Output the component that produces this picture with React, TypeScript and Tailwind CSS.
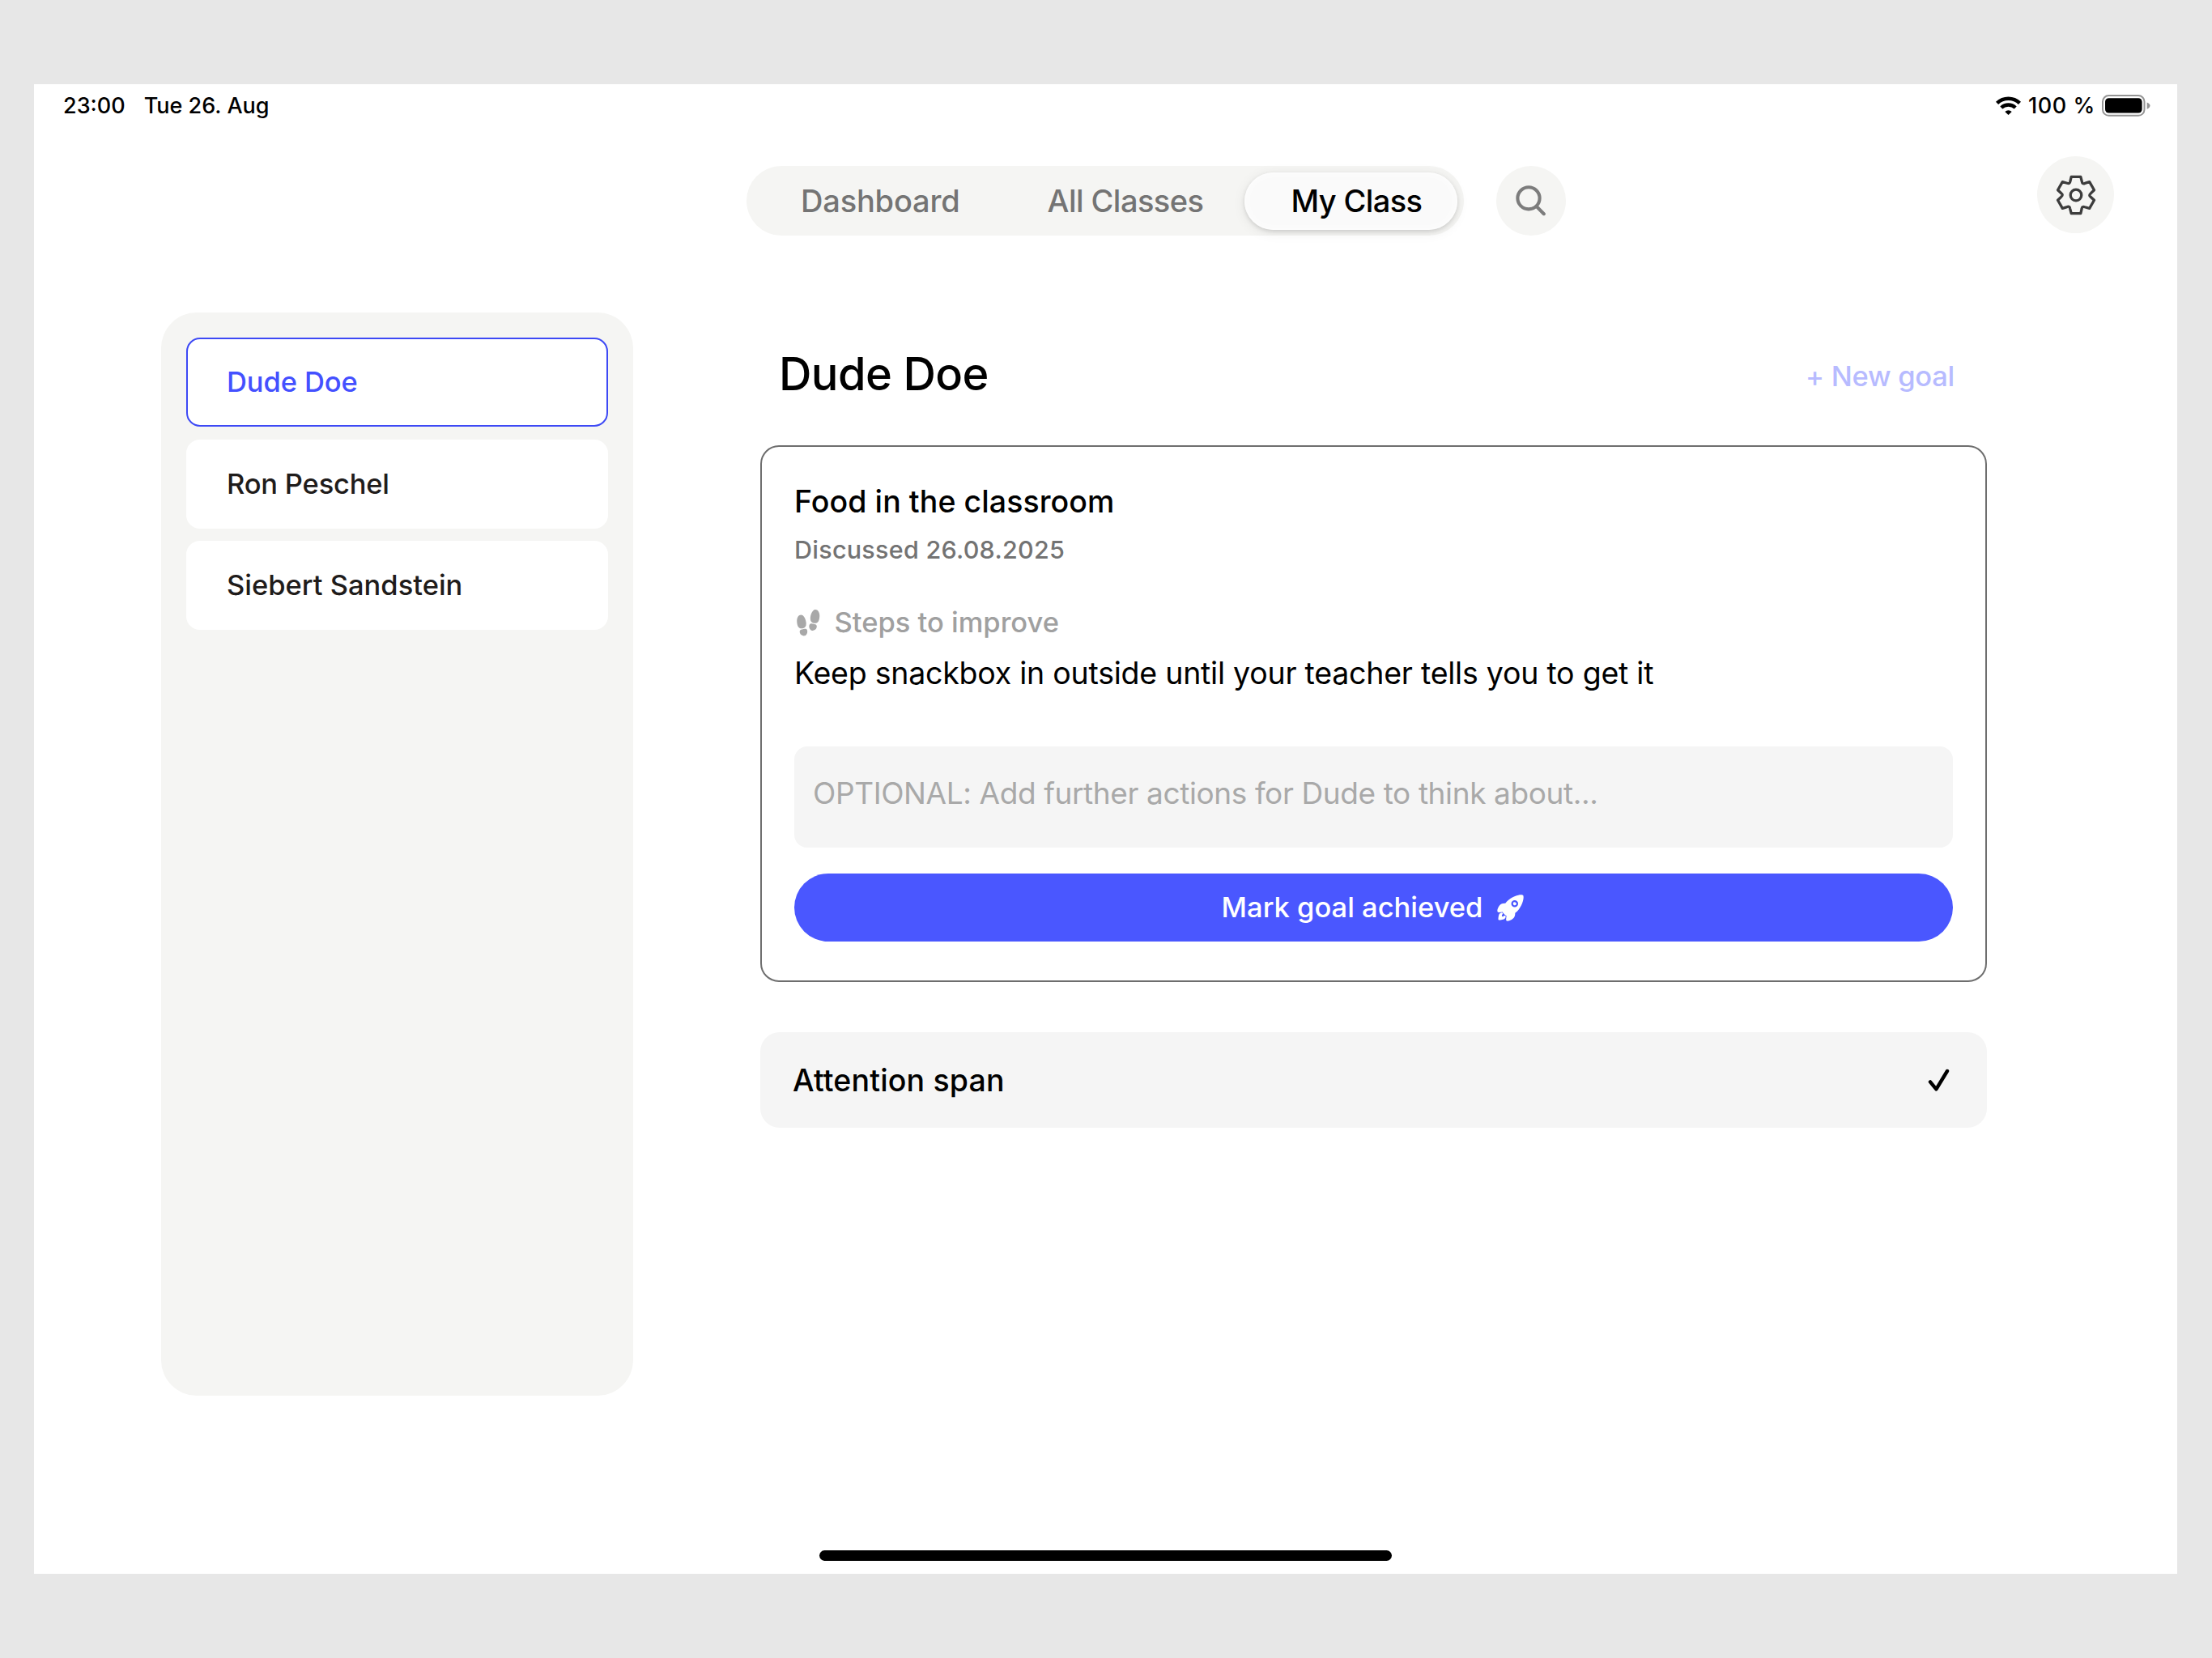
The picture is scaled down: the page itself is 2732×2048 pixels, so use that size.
import { IoFootsteps, IoRocket } from 'react-icons/io5';

const students = [
  { name: 'Dude Doe', tracking: 'tracking-[-0.1px]', active: true },
  { name: 'Ron Peschel', tracking: 'tracking-[-0.2px]', active: false },
  { name: 'Siebert Sandstein', tracking: 'tracking-normal', active: false },
];

// One tooth plus the valley after it, turned six times round the centre
const TOOTH = [
  [-5.8, -22.6],
  [5.8, -22.6],
  [7.3, -16.8],
  [7.9, -13.2],
  [11, -14.6],
];

function gearPath() {
  const parts: string[] = [];
  for (let i = 0; i < 6; i++) {
    const a = (i * Math.PI) / 3;
    const [p1, p2, p3, c, p4] = TOOTH.map(
      ([x, y]) =>
        `${(x * Math.cos(a) - y * Math.sin(a)).toFixed(2)} ${(x * Math.sin(a) + y * Math.cos(a)).toFixed(2)}`
    );
    parts.push(`${i === 0 ? 'M' : 'L'}${p1}L${p2}L${p3}Q${c} ${p4}`);
  }
  return parts.join('') + 'Z';
}

function GearIcon() {
  return (
    <svg width="52" height="52" viewBox="-26 -26 52 52" fill="none" stroke="#3c3c3c" strokeWidth="3.3" strokeLinejoin="round">
      <path d={gearPath()} />
      <circle cx="0" cy="0" r="6.8" />
    </svg>
  );
}

function WifiIcon() {
  return (
    <svg width="31" height="23" viewBox="0 0 31 23" fill="none" stroke="#000">
      <path d="M1.5 8.4a20.2 20.2 0 0 1 28 0" strokeWidth="4.6" />
      <path d="M6.8 14a12.6 12.6 0 0 1 17.4 0" strokeWidth="4.4" />
      <path d="M15.5 23l-4.2-4.1a5.9 5.9 0 0 1 8.4 0z" fill="#000" stroke="none" />
    </svg>
  );
}

function BatteryIcon() {
  return (
    <svg width="60" height="27" viewBox="0 0 60 27" fill="none">
      <rect x="1" y="1" width="51.5" height="24.8" rx="7.5" stroke="#949494" strokeWidth="2" />
      <rect x="4" y="4.2" width="45.6" height="18.4" rx="4.5" fill="#000" />
      <path d="M55.7 9.4c2.2.7 3.8 2.3 3.8 4.2s-1.6 3.5-3.8 4.2z" fill="#949494" />
    </svg>
  );
}

function StatusBar() {
  return (
    <div className="flex h-[53px] items-center justify-between pl-9 pr-[33px] text-[27px] font-medium leading-[36px] text-black">
      <div className="flex gap-[23px]">
        <span>23:00</span>
        <span>Tue 26. Aug</span>
      </div>
      <div className="flex items-center">
        <WifiIcon />
        <span className="ml-[9px] tracking-[0.6px]">100 %</span>
        <div className="ml-[8px]">
          <BatteryIcon />
        </div>
      </div>
    </div>
  );
}

function Header() {
  return (
    <header className="flex h-[229px] items-start pl-[880px] pr-[78px] text-[38px] leading-[44px]">
      <nav className="mt-[48px] flex h-[86px] w-[886px] items-center rounded-full bg-[#f5f5f3] pl-[67px] font-medium text-[#747474]">
        <span className="tracking-[-0.18px]">Dashboard</span>
        <span className="ml-[108px] tracking-[-0.56px]">All Classes</span>
        <span className="ml-[51px] flex h-[71px] w-[263px] items-center whitespace-nowrap rounded-full bg-[#fafafa] pl-[57px] tracking-[-0.6px] text-black shadow-[0_2px_5px_rgba(0,0,0,0.12),0_3px_16px_rgba(0,0,0,0.08),inset_0_0_8px_2px_#fdfdfd]">
          My Class
        </span>
      </nav>
      <button className="ml-[40px] mt-[48px] flex h-[86px] w-[86px] items-center justify-center rounded-full bg-[#f5f5f3]">
        <svg width="38" height="38" viewBox="0 0 38 38" fill="none" stroke="#7c7c7c" strokeWidth="4.1" strokeLinecap="round">
          <circle cx="16" cy="15.8" r="13.6" />
          <path d="M25.8 26l9 9.2" />
        </svg>
      </button>
      <button className="ml-auto mt-[36px] flex h-[95px] w-[95px] items-center justify-center rounded-full bg-[#f5f5f3]">
        <GearIcon />
      </button>
    </header>
  );
}

function StudentList() {
  return (
    <aside className="flex h-[1338px] w-[583px] flex-col gap-[15.5px] rounded-[44px] bg-[#f5f5f3] p-[31px]">
      {students.map((s) => (
        <div
          key={s.name}
          className={`flex h-[110px] items-center rounded-[17px] border-2 bg-white pl-[48px] text-[34.5px] font-medium ${s.tracking} ${
            s.active ? 'border-[#3d49f5] text-[#4450ff]' : 'border-white text-[#1f1c1b]'
          }`}
        >
          {s.name}
        </div>
      ))}
    </aside>
  );
}

function GoalCard() {
  return (
    <div className="flex h-[663px] flex-col rounded-[23px] border-2 border-[#6e6e6e] px-[40px] pt-[46px]">
      <h2 className="text-[37.5px] font-medium leading-[44px] tracking-[0.08px] text-black">Food in the classroom</h2>
      <p className="mt-[17px] text-[30.5px] font-medium leading-10 tracking-[0.26px] text-[#737373]">Discussed 26.08.2025</p>

      <div className="mt-[50px] flex h-10 items-center gap-[15px] text-[34.5px] font-medium leading-10 text-[#a0a0a0]">
        <IoFootsteps className="text-[34.5px] text-[#a8a8a8]" />
        Steps to improve
      </div>
      <p className="mt-[21px] text-[37.5px] leading-[44px] tracking-[-0.238px] text-black">
        Keep snackbox in outside until your teacher tells you to get it
      </p>

      <div className="mt-[68px] h-[125px] rounded-2xl bg-[#f5f5f5] pl-[23px] pt-[36px] text-[37px] leading-[44px] tracking-[-0.39px] text-[#a9a9a9]">
        OPTIONAL: Add further actions for Dude to think about...
      </div>
      <button className="mt-8 flex h-[84px] items-center justify-center gap-[16px] rounded-full bg-[#4a57ff] text-[34.5px] font-medium text-white">
        Mark goal achieved
        <IoRocket className="text-[37px]" />
      </button>
    </div>
  );
}

export default function App() {
  return (
    <div className="flex h-[2048px] w-[2732px] bg-[#e7e7e7] pl-[42px] pt-[104px] font-['Inter',sans-serif]">
      <div className="flex h-[1840px] w-[2647px] flex-col bg-white">
        <StatusBar />
        <Header />

        <main className="flex gap-[157px] pl-[157px]">
          <StudentList />

          <section className="w-[1515px]">
            <div className="mb-3 flex h-[152px] items-center justify-between pl-[23px] pr-[40px]">
              <h1 className="text-[56px] font-medium leading-[64px] tracking-[-0.6px] text-black">Dude Doe</h1>
              <button className="pt-[6px] text-[34.5px] font-medium leading-10 tracking-[-0.26px] text-[#b7bbff]">
                + New goal
              </button>
            </div>

            <GoalCard />

            {/* Finished goals collapse to a single row */}
            <div className="mt-[62px] flex h-[118px] items-center justify-between rounded-[24px] bg-[#f5f5f5] pl-[40px] pr-[46px]">
              <span className="pt-[2px] text-[37.5px] font-medium tracking-[0.16px] text-black">Attention span</span>
              <svg width="27" height="29" viewBox="0 0 27 29" fill="none" stroke="#000" strokeWidth="4.4" strokeLinecap="round" strokeLinejoin="round">
                <path d="M3 16.4l7.4 9L24 3" />
              </svg>
            </div>
          </section>
        </main>

        {/* Home indicator */}
        <div className="mx-auto mb-[16px] mt-auto h-[13px] w-[707px] rounded-full bg-black" />
      </div>
    </div>
  );
}
